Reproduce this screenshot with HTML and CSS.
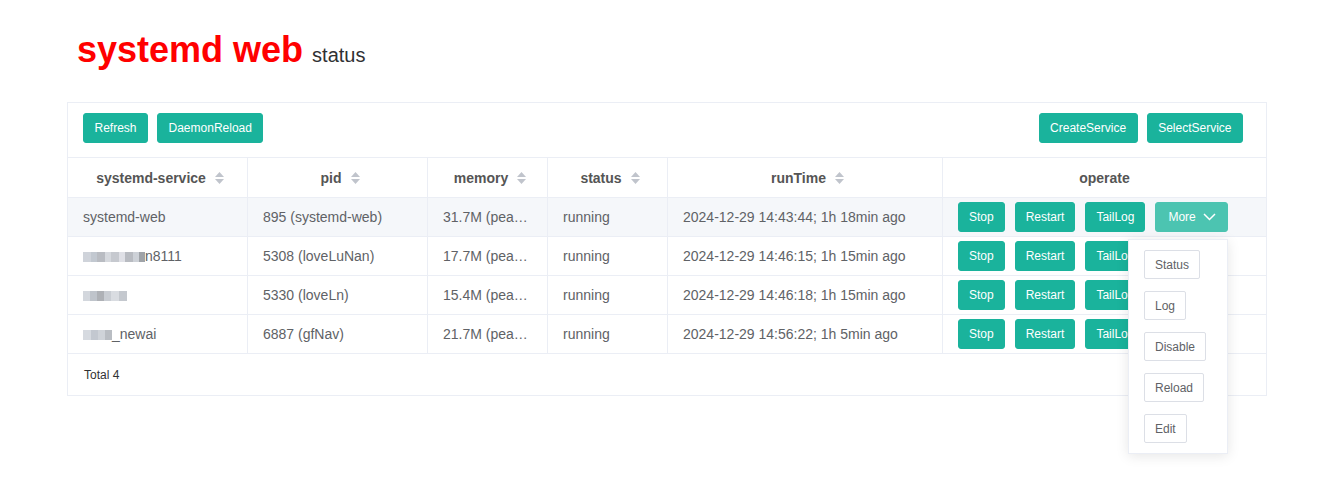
FILE: index.html
```html
<!DOCTYPE html>
<html>
<head>
<meta charset="utf-8">
<link rel="stylesheet" href="styles.css">
</head>
<body>
<div class="page">
  <div class="header">
    <h1 class="title">systemd web</h1>
    <span class="subtitle">status</span>
  </div>
  <div class="panel">
    <div class="toolbar">
      <div class="group">
        <button class="btn tb">Refresh</button>
        <button class="btn tb">DaemonReload</button>
      </div>
      <div class="group">
        <button class="btn tb">CreateService</button>
        <button class="btn tb">SelectService</button>
      </div>
    </div>
    <table class="grid">
      <colgroup>
        <col class="c1"><col class="c2"><col class="c3"><col class="c4"><col class="c5"><col>
      </colgroup>
      <thead>
        <tr>
          <th><span class="th-in sortable">systemd-service<svg class="sort" width="9" height="12" viewBox="0 0 9 12"><path d="M0 5L4.5 0L9 5Z"/><path d="M0 7L4.5 12L9 7Z"/></svg></span></th>
          <th><span class="th-in sortable">pid<svg class="sort" width="9" height="12" viewBox="0 0 9 12"><path d="M0 5L4.5 0L9 5Z"/><path d="M0 7L4.5 12L9 7Z"/></svg></span></th>
          <th><span class="th-in sortable">memory<svg class="sort" width="9" height="12" viewBox="0 0 9 12"><path d="M0 5L4.5 0L9 5Z"/><path d="M0 7L4.5 12L9 7Z"/></svg></span></th>
          <th><span class="th-in sortable">status<svg class="sort" width="9" height="12" viewBox="0 0 9 12"><path d="M0 5L4.5 0L9 5Z"/><path d="M0 7L4.5 12L9 7Z"/></svg></span></th>
          <th><span class="th-in sortable">runTime<svg class="sort" width="9" height="12" viewBox="0 0 9 12"><path d="M0 5L4.5 0L9 5Z"/><path d="M0 7L4.5 12L9 7Z"/></svg></span></th>
          <th class="last"><span class="th-in">operate</span></th>
        </tr>
      </thead>
      <tbody>
        <tr class="hover">
          <td>systemd-web</td>
          <td>895 (systemd-web)</td>
          <td class="ell">31.7M (peak: 45.2M)</td>
          <td>running</td>
          <td>2024-12-29 14:43:44; 1h 18min ago</td>
          <td class="last">
            <div class="ops">
              <button class="btn">Stop</button>
              <button class="btn">Restart</button>
              <button class="btn">TailLog</button>
              <button class="btn more">More<svg class="chev" width="13" height="8" viewBox="0 0 13 8"><path d="M1 1L6.5 6.5L12 1" fill="none" stroke="#fff" stroke-width="1.5"/></svg></button>
            </div>
          </td>
        </tr>
        <tr>
          <td><span class="mosaic m1"></span>n8111</td>
          <td>5308 (loveLuNan)</td>
          <td class="ell">17.7M (peak: 30.1M)</td>
          <td>running</td>
          <td>2024-12-29 14:46:15; 1h 15min ago</td>
          <td class="last">
            <div class="ops">
              <button class="btn">Stop</button>
              <button class="btn">Restart</button>
              <button class="btn">TailLog</button>
            </div>
          </td>
        </tr>
        <tr>
          <td><span class="mosaic m2"></span></td>
          <td>5330 (loveLn)</td>
          <td class="ell">15.4M (peak: 22.0M)</td>
          <td>running</td>
          <td>2024-12-29 14:46:18; 1h 15min ago</td>
          <td class="last">
            <div class="ops">
              <button class="btn">Stop</button>
              <button class="btn">Restart</button>
              <button class="btn">TailLog</button>
            </div>
          </td>
        </tr>
        <tr>
          <td><span class="mosaic m3"></span>_newai</td>
          <td>6887 (gfNav)</td>
          <td class="ell">21.7M (peak: 28.4M)</td>
          <td>running</td>
          <td>2024-12-29 14:56:22; 1h 5min ago</td>
          <td class="last">
            <div class="ops">
              <button class="btn">Stop</button>
              <button class="btn">Restart</button>
              <button class="btn">TailLog</button>
            </div>
          </td>
        </tr>
      </tbody>
    </table>
    <div class="footer">Total 4</div>
    <div class="menu">
      <button class="item">Status</button>
      <button class="item">Log</button>
      <button class="item">Disable</button>
      <button class="item">Reload</button>
      <button class="item">Edit</button>
    </div>
  </div>
</div>
</body>
</html>
```

FILE: styles.css
```css
* { box-sizing: border-box; }
html, body { min-height: 100%; }
body {
  margin: 0;
  min-height: 504px;
  background: #fff;
  font-family: "Liberation Sans", Arial, sans-serif;
  color: #606266;
}
.page {
  width: 1200px;
  min-height: 504px;
  margin: 0 auto;
}
.header {
  height: 102px;
  padding: 32px 0 0 10px;
  display: flex;
  align-items: baseline;
  gap: 9px;
}
.title {
  margin: 0;
  font-size: 36px;
  line-height: 36px;
  font-weight: bold;
  color: #ff0000;
}
.subtitle {
  font-size: 20px;
  color: #303133;
}
.panel {
  border: 1px solid #ebeef5;
  position: relative;
}
.toolbar {
  display: flex;
  justify-content: space-between;
  padding: 10px 23px 14px 15px;
}
.group {
  display: flex;
  gap: 9px;
}
.btn {
  height: 30px;
  padding: 0 10px;
  border: 1px solid #1ab39c;
  background: #1ab39c;
  color: #fff;
  border-radius: 3px;
  font-family: "Liberation Sans", Arial, sans-serif;
  font-size: 12px;
  line-height: 28px;
  white-space: nowrap;
  cursor: pointer;
}
.btn.tb { padding: 0 10.5px; }
.grid {
  width: 100%;
  table-layout: fixed;
  border-collapse: separate;
  border-spacing: 0;
  border-top: 1px solid #ebeef5;
}
.c1 { width: 180px; }
.c2 { width: 180px; }
.c3 { width: 120px; }
.c4 { width: 120px; }
.c5 { width: 275px; }
th, td {
  border-right: 1px solid #ebeef5;
  border-bottom: 1px solid #ebeef5;
  padding: 0 15px;
}
th.last, td.last { border-right: none; }
th {
  height: 40px;
  font-size: 14px;
  font-weight: bold;
  color: #555;
  text-align: center;
}
.th-in {
  display: inline-flex;
  align-items: center;
  gap: 9px;
}
.th-in.sortable { padding-left: 5px; }
.sort { fill: #c0c4cc; }
td {
  height: 39px;
  font-size: 14px;
  color: #606266;
  white-space: nowrap;
}
.ell {
  overflow: hidden;
  text-overflow: ellipsis;
}
tr.hover td { background: #f5f7fa; }
.ops {
  display: flex;
  gap: 10px;
  align-items: center;
}
.btn.more {
  background: #4cc4b1;
  border-color: #4cc4b1;
  display: flex;
  align-items: center;
  gap: 7px;
  padding: 0 11px 0 12px;
}
.chev { display: block; }
.menu {
  position: absolute;
  top: 136px;
  left: 1060px;
  width: 100px;
  background: #fff;
  border: 1px solid #ebeef5;
  box-shadow: 0 2px 12px rgba(0, 0, 0, 0.1);
  padding: 10px 15px;
  display: flex;
  flex-direction: column;
  align-items: flex-start;
  gap: 12px;
  z-index: 5;
}
.item {
  height: 29px;
  padding: 0 10px;
  background: #fff;
  border: 1px solid #dcdfe6;
  border-radius: 2px;
  color: #606266;
  font-family: "Liberation Sans", Arial, sans-serif;
  font-size: 12px;
}
.mosaic {
  display: inline-block;
  height: 10px;
  vertical-align: -1px;
  filter: blur(0.7px);
}
.m1 {
  width: 62px;
  background: linear-gradient(90deg, #cfd3da 0 8px, #c2c8d0 8px 14px, #b9bcc2 14px 22px, #d6d9de 22px 28px, #c6c9cf 28px 36px, #dfe0e6 36px 42px, #b8bbc1 42px 50px, #cdd1d7 50px 56px, #9fa3a8 56px 62px);
}
.m2 {
  width: 44px;
  background: linear-gradient(90deg, #d3d7dd 0 7px, #bfc4cb 7px 14px, #aeb1b6 14px 21px, #c9cdd3 21px 28px, #d9dce1 28px 36px, #c4c8ce 36px 44px);
}
.m3 {
  width: 29px;
  background: linear-gradient(90deg, #d6dae0 0 8px, #c3c8d0 8px 15px, #cfd3d9 15px 22px, #b9bdc3 22px 29px);
}
.footer {
  height: 41px;
  padding: 0 16px;
  display: flex;
  align-items: center;
  font-size: 12px;
  color: #303133;
}
```
